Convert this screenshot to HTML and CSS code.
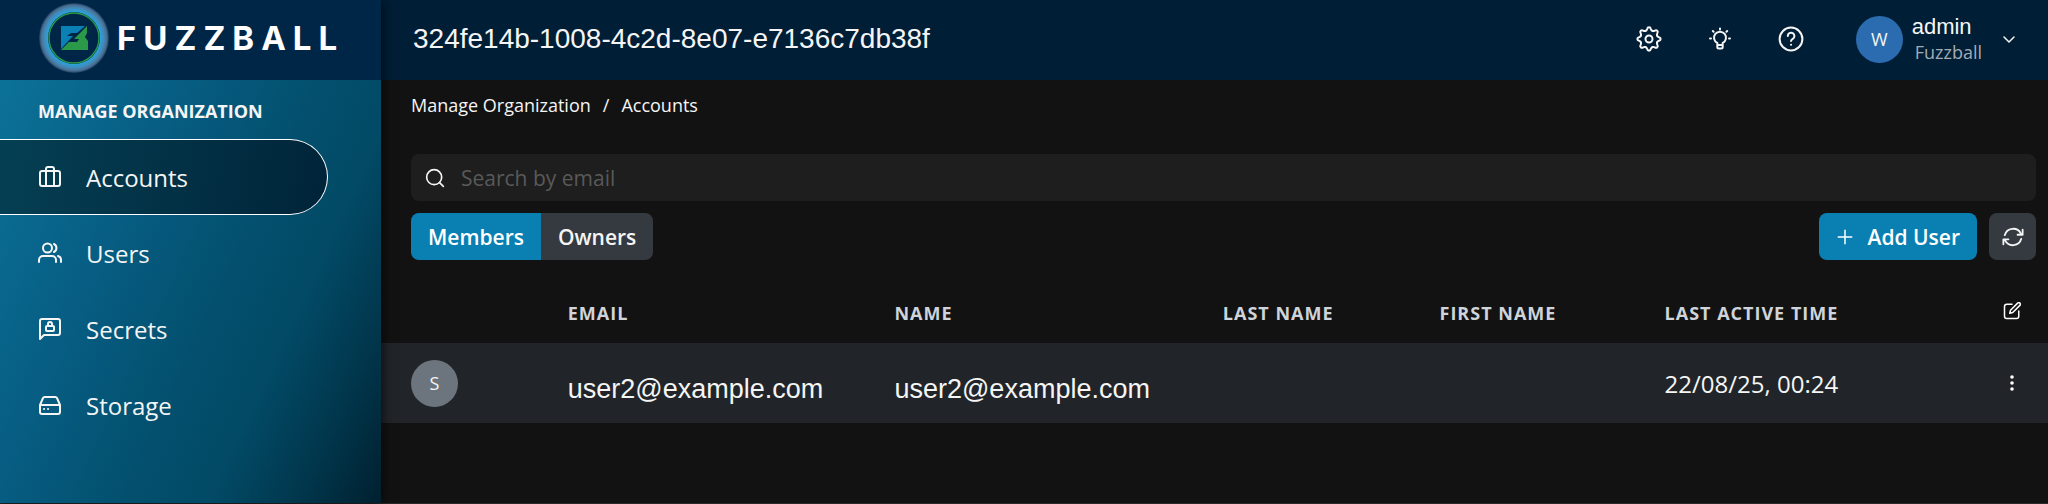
FILE: index.html
```html
<!DOCTYPE html>
<html lang="en">
<head>
    <meta charset="UTF-8">
    <meta name="viewport" content="width=device-width, initial-scale=1.0">
    <title>Fuzzball - Accounts</title>
    <link rel="stylesheet" href="styles.css">
</head>
<body>
    <div class="app">
        <aside class="sidebar">
            <a class="logo" href="#">
                <svg class="logo-mark" viewBox="0 0 70 70" aria-hidden="true">
                    <defs>
                        <radialGradient id="glow">
                            <stop offset="0.76" stop-color="#2e9fd8"/>
                            <stop offset="0.86" stop-color="#4289b8"/>
                            <stop offset="0.94" stop-color="#4a6d90"/>
                            <stop offset="1" stop-color="#4a6d90" stop-opacity="0.3"/>
                        </radialGradient>
                    </defs>
                    <circle cx="35" cy="35" r="35" fill="url(#glow)"/>
                    <circle cx="35" cy="35" r="26" fill="#002647"/>
                    <circle cx="35" cy="35" r="25" fill="none" stroke="#2a9a4a" stroke-width="1.4"/>
                    <path d="M22 23H46L38 30H32L28 33H34L22 46Z" fill="#0a80b5"/>
                    <path d="M48 23V30L46 34L49 38V47H22L30 39H38L40 36H35Z" fill="#2a9a4a"/>
                </svg>
                <span class="logo-text">FUZZBALL</span>
            </a>
            <nav class="menu">
                <h2 class="menu-title">MANAGE ORGANIZATION</h2>
                <a class="menu-item active" href="#">
                    <svg class="icon" viewBox="0 0 24 24"><rect x="2" y="6" width="20" height="15" rx="2"/><path d="M8 21V4a2 2 0 0 1 2-2h4a2 2 0 0 1 2 2v17"/></svg>
                    Accounts
                </a>
                <a class="menu-item" href="#">
                    <svg class="icon" viewBox="0 0 24 24"><circle cx="9.5" cy="7" r="4.5"/><path d="M1 21v-2a4 4 0 0 1 4-4h9a4 4 0 0 1 4 4v2M16 3a4.500 4.500 0 0 1 0 8M20 15a4 4 0 0 1 3 4v2"/></svg>
                    Users
                </a>
                <a class="menu-item" href="#">
                    <svg class="icon" viewBox="0 0 24 24"><path d="M2 22V4a2 2 0 0 1 2-2h16a2 2 0 0 1 2 2v12a2 2 0 0 1-2 2H6z"/><rect x="8" y="9" width="8" height="5" rx="1"/><path d="M10 9V7a2 2 0 0 1 4 0v2"/></svg>
                    Secrets
                </a>
                <a class="menu-item" href="#">
                    <svg class="icon" viewBox="0 0 24 24"><path d="M2 12L5 5a2 2 0 0 1 2-1h10a2 2 0 0 1 2 1l3 7v7a2 2 0 0 1-2 2H4a2 2 0 0 1-2-2zM2 12h20M6 16h.1M10 16h.1"/></svg>
                    Storage
                </a>
            </nav>
        </aside>

        <div class="content">
            <header class="topbar">
                <h1 class="org-id">324fe14b-1008-4c2d-8e07-e7136c7db38f</h1>
                <div class="tools">
                    <button class="tool" type="button" aria-label="Settings">
                        <svg class="icon" viewBox="-13 -13 26 26">
                            <defs><path id="tooth" d="M-3.4-8.1C-2.3-8.6-2-9.200-1.800-10C-1.400-12.200 1.400-12.200 1.800-10C2-9.200 2.300-8.600 3.400-8.100"/></defs>
                            <circle r="3.5"/>
                            <use href="#tooth"/>
                            <use href="#tooth" transform="rotate(45)"/>
                            <use href="#tooth" transform="rotate(90)"/>
                            <use href="#tooth" transform="rotate(135)"/>
                            <use href="#tooth" transform="rotate(180)"/>
                            <use href="#tooth" transform="rotate(225)"/>
                            <use href="#tooth" transform="rotate(270)"/>
                            <use href="#tooth" transform="rotate(315)"/>
                        </svg>
                    </button>
                    <button class="tool" type="button" aria-label="Tips">
                        <svg class="icon" viewBox="0 0 26 26"><path d="M10.300 19v-2a6 6 0 1 1 5.400 0v4a1.500 1.500 0 0 1-1.500 1.500h-2.400a1.500 1.500 0 0 1-1.500-1.500zh5.400M13 2.500v1M5.800 5l.8.800M20.200 5l-.8.800M3 12.500h1M22 12.500h1"/></svg>
                    </button>
                    <button class="tool" type="button" aria-label="Help">
                        <svg class="icon" viewBox="0 0 26 26"><circle cx="13" cy="13" r="11.4"/><path d="M9.800 10a3.300 3.300 0 1 1 5 2.800c-1.200.7-1.800 1.100-1.800 2.200M13 18.700h.1"/></svg>
                    </button>
                    <button class="account" type="button">
                        <span class="avatar avatar-blue">W</span>
                        <span class="account-text">
                            <span class="account-name">admin</span>
                            <span class="account-org">Fuzzball</span>
                        </span>
                        <svg class="chevron" viewBox="0 0 14 14"><path d="M2 5l5 5 5-5"/></svg>
                    </button>
                </div>
            </header>

            <main>
                <nav class="breadcrumb">
                    <a href="#">Manage Organization</a>
                    <span>/</span>
                    <a href="#">Accounts</a>
                </nav>

                <div class="search">
                    <svg class="icon" viewBox="0 0 24 24"><circle cx="11" cy="11" r="9"/><path d="M17.500 17.500L22 22"/></svg>
                    <input type="search" placeholder="Search by email" aria-label="Search by email">
                </div>

                <div class="actions">
                    <div class="tabs">
                        <button class="tab selected" type="button">Members</button>
                        <button class="tab" type="button">Owners</button>
                    </div>
                    <button class="btn-add" type="button">
                        <svg class="icon" viewBox="0 0 24 24"><path d="M12 3v18M3 12h18"/></svg>
                        Add User
                    </button>
                    <button class="btn-refresh" type="button" aria-label="Refresh">
                        <svg class="icon" viewBox="0 0 24 24"><path d="M3 10a9.500 9.500 0 0 1 17.500-2M22.500 4v5.500H17M21 14a9.500 9.500 0 0 1-17.500 2M1.500 20v-5.500H7"/></svg>
                    </button>
                </div>

                <table class="users">
                    <thead>
                        <tr>
                            <th class="col-avatar"></th>
                            <th class="col-email">EMAIL</th>
                            <th class="col-name">NAME</th>
                            <th class="col-last">LAST NAME</th>
                            <th class="col-first">FIRST NAME</th>
                            <th class="col-active">LAST ACTIVE TIME</th>
                            <th class="col-menu">
                                <button class="row-btn" type="button" aria-label="Edit columns">
                                    <svg class="icon" viewBox="0 0 24 24"><path d="M12 3H5a3 3 0 0 0-3 3v13a3 3 0 0 0 3 3h13a3 3 0 0 0 3-3v-7M9 15l1-4 9.500-9.500a2 2 0 0 1 3 3L13 14z"/></svg>
                                </button>
                            </th>
                        </tr>
                    </thead>
                    <tbody>
                        <tr>
                            <td class="col-avatar"><span class="avatar">S</span></td>
                            <td class="address">user2@example.com</td>
                            <td class="address">user2@example.com</td>
                            <td></td>
                            <td></td>
                            <td>22/08/25, 00:24</td>
                            <td class="col-menu">
                                <button class="row-btn" type="button" aria-label="Row menu">
                                    <svg class="icon dots" viewBox="0 0 18 18"><circle cx="9" cy="3" r="1.8"/><circle cx="9" cy="9" r="1.8"/><circle cx="9" cy="15" r="1.8"/></svg>
                                </button>
                            </td>
                        </tr>
                    </tbody>
                </table>
            </main>
        </div>
    </div>
</body>
</html>
```
FILE: styles.css
```css
* {
    box-sizing: border-box;
}
body {
    margin: 0;
    font-family: "Open Sans", sans-serif;
    font-size: 24px;
    background-color: #121212;
    color: #f5f5f5;
}
a {
    color: inherit;
    text-decoration: none;
}
button {
    font-family: inherit;
    color: inherit;
    background: none;
    border: none;
    padding: 0;
    display: flex;
    align-items: center;
    justify-content: center;
}
.icon, .chevron {
    width: 24px;
    height: 24px;
    flex: none;
    fill: none;
    stroke: currentColor;
    stroke-width: 2;
    stroke-linecap: round;
    stroke-linejoin: round;
}
.app {
    display: flex;
    min-height: 100vh;
    border-bottom: 1px solid #2a2a2a;
}

/* sidebar */
.sidebar {
    width: 381px;
    flex: none;
    display: flex;
    flex-direction: column;
    z-index: 1;
    box-shadow: 0 0 12px rgba(0, 0, 0, 0.8);
}
.logo {
    height: 80px;
    padding: 0 0 4px 39px;
    display: flex;
    align-items: center;
    gap: 8px;
    background-color: #002647;
}
.logo-mark {
    width: 70px;
    height: 70px;
    flex: none;
}
.logo-text {
    font-family: Inter, sans-serif;
    font-size: 33px;
    font-weight: 700;
    letter-spacing: 7px;
    color: #fff;
}
.menu {
    flex: 1;
    padding-top: 15px;
    background: linear-gradient(115deg, #0c7298 0%, #075e84 30%, #03506e 55%, #024a66 70%, #01374d 85%, #00202f 100%);
}
.menu-title {
    margin: 0 0 12px;
    padding-left: 38px;
    font-size: 18px;
    line-height: 32px;
}
.menu-item {
    display: flex;
    align-items: center;
    gap: 24px;
    height: 76px;
    margin-right: 53px;
    padding-left: 38px;
    border: 1px solid transparent;
    border-left: none;
    border-radius: 0 38px 38px 0;
}
.menu-item.active {
    border-color: #fff;
    background: linear-gradient(100deg, #053f53, #002439);
}

/* top bar */
.content {
    flex: 1;
    min-width: 0;
}
.topbar {
    height: 80px;
    padding: 0 32px 2px;
    display: flex;
    align-items: center;
    justify-content: space-between;
    background-color: #001e36;
}
.org-id {
    margin: 0;
    font-family: "Liberation Sans", Arial, sans-serif;
    font-size: 28px;
    font-weight: normal;
}
.tools {
    display: flex;
    align-items: center;
    gap: 45px;
}
.tool .icon {
    width: 26px;
    height: 26px;
}
.account {
    gap: 9px;
    margin-left: 7px;
    text-align: left;
}
.account-text {
    display: flex;
    flex-direction: column;
}
.account-name {
    font-family: "Liberation Sans", Arial, sans-serif;
    font-size: 22px;
    line-height: 26px;
}
.account-org {
    padding-left: 3px;
    font-size: 18px;
    line-height: 24px;
    color: #a3abb5;
}
.chevron {
    width: 14px;
    height: 14px;
    margin-left: 11px;
    stroke-width: 1.5;
}
.avatar {
    width: 47px;
    height: 47px;
    border-radius: 50%;
    display: flex;
    align-items: center;
    justify-content: center;
    font-size: 18px;
    background-color: #6c757d;
}
.avatar-blue {
    background-color: #2b6cb0;
}

/* page */
.breadcrumb {
    display: flex;
    gap: 12px;
    padding: 12px 30px 0;
    font-size: 18px;
    line-height: 26px;
}
.search {
    display: flex;
    align-items: center;
    gap: 16px;
    height: 47px;
    margin: 36px 12px 12px 30px;
    padding: 0 14px;
    border-radius: 8px;
    background-color: #1e1e1e;
}
.search .icon {
    width: 20px;
    height: 20px;
}
.search input {
    flex: 1;
    padding: 0;
    border: none;
    outline: none;
    background: none;
    color: inherit;
    font-family: inherit;
    font-size: 21px;
}
.search input::placeholder {
    color: #595959;
}
.actions {
    display: flex;
    gap: 12px;
    margin: 0 12px 0 30px;
}
.tabs {
    display: flex;
    margin-right: auto;
    border-radius: 8px;
    overflow: hidden;
}
.tab, .btn-add, .btn-refresh {
    height: 47px;
    font-size: 21px;
    font-weight: 600;
    background-color: #343a40;
}
.tab {
    padding: 0 17px;
}
.tab.selected, .btn-add {
    background-color: #0a7fb2;
    color: #fff;
}
.btn-add {
    gap: 14px;
    padding: 0 17px;
    border-radius: 8px;
}
.btn-add .icon {
    width: 18px;
    height: 18px;
}
.btn-refresh {
    width: 47px;
    border-radius: 8px;
}
.btn-refresh .icon {
    width: 22px;
    height: 22px;
}

/* users table */
.users {
    width: 100%;
    margin-top: 23px;
    border-collapse: collapse;
    table-layout: fixed;
}
.users th, .users td {
    padding: 0;
    text-align: left;
}
.users th {
    height: 60px;
    font-size: 18px;
    letter-spacing: 1px;
    color: #ced4da;
}
.users td {
    height: 80px;
    background-color: #212529;
}
.users .address {
    padding-top: 12px;
    font-family: "Liberation Sans", Arial, sans-serif;
    font-size: 27px;
}
.users .col-avatar {
    width: 11.2%;
    padding-left: 30px;
}
.col-email {
    width: 19.6%;
}
.col-name {
    width: 19.7%;
}
.col-last {
    width: 13%;
}
.col-first {
    width: 13.5%;
}
.users .col-menu {
    padding-right: 27px;
}
.users th.col-menu {
    padding-bottom: 4px;
}
.row-btn {
    margin-left: auto;
    color: #fff;
}
.row-btn .icon {
    width: 18px;
    height: 18px;
}
.row-btn .dots {
    fill: currentColor;
    stroke: none;
}
```
